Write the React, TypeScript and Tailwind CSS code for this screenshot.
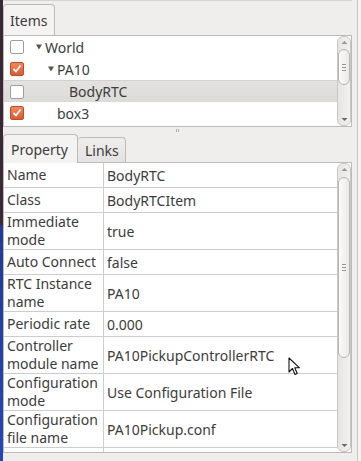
import React from 'react';

const font = { fontFamily: '"Noto Sans", "Open Sans", sans-serif' };

type TreeRow = { label: string; checked: boolean; depth: number; arrow: boolean; selected?: boolean };

const treeRows: TreeRow[] = [
  { label: 'World', checked: false, depth: 0, arrow: true },
  { label: 'PA10', checked: true, depth: 1, arrow: true },
  { label: 'BodyRTC', checked: false, depth: 2, arrow: false, selected: true },
  { label: 'box3', checked: true, depth: 1, arrow: false },
];

const props: { name: string[]; value: string }[] = [
  { name: ['Name'], value: 'BodyRTC' },
  { name: ['Class'], value: 'BodyRTCItem' },
  { name: ['Immediate', 'mode'], value: 'true' },
  { name: ['Auto Connect'], value: 'false' },
  { name: ['RTC Instance', 'name'], value: 'PA10' },
  { name: ['Periodic rate'], value: '0.000' },
  { name: ['Controller', 'module name'], value: 'PA10PickupControllerRTC' },
  { name: ['Configuration', 'mode'], value: 'Use Configuration File' },
  { name: ['Configuration', 'file name'], value: 'PA10Pickup.conf' },
];

function CheckBox({ checked }: { checked: boolean }) {
  if (!checked) {
    return <div className="w-[14px] h-[14px] rounded-[2px] border border-[#a09e9b] bg-white" />;
  }
  return (
    <div className="w-[14px] h-[14px] rounded-[2px] border border-[#b5532c] bg-gradient-to-b from-[#f3875a] to-[#dd5a2e] flex items-center justify-center">
      <svg width="10" height="10" viewBox="0 0 10 10">
        <path d="M1.5 5 L4 7.5 L8.5 1.5" stroke="white" strokeWidth="1.8" fill="none" />
      </svg>
    </div>
  );
}

function Arrow() {
  return (
    <svg width="6" height="6" viewBox="0 0 6 6" className="mr-[3px]">
      <path d="M0 0.5 L6 0.5 L3 5.5 Z" fill="#555" />
    </svg>
  );
}

function ScrollBar({ thumbTop, thumbHeight }: { thumbTop: number; thumbHeight: number }) {
  return (
    <div className="relative w-[14px] h-full rounded-[6px] border border-[#c9c7c4] bg-gradient-to-r from-[#e6e5e3] to-[#f2f1f0]">
      <svg className="absolute left-[3px] top-[3px]" width="7" height="5" viewBox="0 0 7 5">
        <path d="M0.5 4 L3.5 1 L6.5 4 Z" fill="#9a9895" />
      </svg>
      <div
        className="absolute left-[0px] w-[12px] rounded-[6px] border border-[#b9b7b4] bg-gradient-to-r from-[#fbfbfa] to-[#eae9e7] flex flex-col items-center justify-center gap-[2px]"
        style={{ top: thumbTop, height: thumbHeight }}
      >
        <div className="w-[4px] h-px bg-[#9a9895]" />
        <div className="w-[4px] h-px bg-[#9a9895]" />
        <div className="w-[4px] h-px bg-[#9a9895]" />
      </div>
      <svg className="absolute left-[3px] bottom-[3px]" width="7" height="5" viewBox="0 0 7 5">
        <path d="M0.5 1 L6.5 1 L3.5 4 Z" fill="#6a6865" />
      </svg>
    </div>
  );
}

export default function App() {
  return (
    <div className="relative w-[361px] h-[461px] flex bg-[#efeeec] text-[#3c3c3c] text-[14px] overflow-hidden" style={font}>
      {/* desktop edge */}
      <div className="w-[3px] h-full flex flex-col">
        <div className="h-[225px] bg-[#3a2935]" />
        <div className="flex-1 bg-gradient-to-b from-[#233a96] to-[#2446b8]" />
      </div>

      <div className="w-[349px] flex flex-col border-t border-[#d6d4d1]">
        {/* Items tab */}
        <div className="pt-[3px] flex">
          <div className="w-[52px] h-[32px] rounded-t-[4px] border border-b-0 border-[#bdbbb8] bg-[#f4f3f2] flex items-center pl-[6px] -mb-px">
            Items
          </div>
        </div>

        {/* Tree */}
        <div className="h-[92px] flex border border-[#bdbbb8] bg-white">
          <div className="flex-1 flex flex-col">
            {treeRows.map(r => (
              <div
                key={r.label}
                className={`h-[22px] flex items-center ${r.selected ? 'bg-gradient-to-b from-[#e3e2e0] to-[#dcdbd8] border-t border-[#d2d1ce]' : ''}`}
              >
                <div className="w-[32px] pl-[6px]">
                  <CheckBox checked={r.checked} />
                </div>
                <div className="flex items-center" style={{ paddingLeft: r.depth * 12 }}>
                  {r.arrow ? <Arrow /> : <div className="w-[9px]" />}
                  <span>{r.label}</span>
                </div>
              </div>
            ))}
          </div>
          <ScrollBar thumbTop={12} thumbHeight={36} />
        </div>

        {/* splitter */}
        <div className="h-[6px] flex justify-center items-center gap-px">
          <div className="w-px h-[3px] bg-[#b0aeab]" />
          <div className="w-px h-[3px] bg-[#b0aeab]" />
        </div>

        {/* Property / Links tabs */}
        <div className="flex items-end h-[29px]">
          <div className="w-[75px] h-[29px] rounded-t-[4px] border border-b-0 border-[#bdbbb8] bg-[#f4f3f2] flex items-center pl-[7px] -mb-px z-10">
            Property
          </div>
          <div className="w-[48px] h-[25px] rounded-t-[4px] border border-b-0 border-l-0 border-[#bdbbb8] bg-gradient-to-b from-[#efeeec] to-[#e4e3e1] flex items-center pl-[7px]">
            Links
          </div>
        </div>

        {/* Property table */}
        <div className="h-[291px] flex border border-[#bdbbb8] bg-white">
          <div className="flex-1 flex flex-col overflow-hidden">
            {props.map(p => (
              <div
                key={p.name.join(' ') + p.value}
                className={`flex shrink-0 border-b border-[#cdcdcd] ${p.name.length > 1 ? 'h-[37px]' : 'h-[25px]'}`}
              >
                <div className="w-[100px] shrink-0 border-r border-[#cdcdcd] pl-[3px] flex flex-col justify-center leading-[18px]">
                  {p.name.map(n => (
                    <span key={n}>{n}</span>
                  ))}
                </div>
                <div className="flex-1 pl-[3px] flex items-center whitespace-nowrap">{p.value}</div>
              </div>
            ))}
            <div className="flex flex-1">
              <div className="w-[100px] shrink-0 border-r border-[#cdcdcd]" />
            </div>
          </div>
          <ScrollBar thumbTop={13} thumbHeight={181} />
        </div>
      </div>

      {/* right edge of window */}
      <div className="flex-1 flex">
        <div className="w-[5px]" />
        <div className="w-px h-full bg-[#c9c7c4]" />
        <div className="flex-1 bg-[#f4f3f2]" />
      </div>

      {/* mouse cursor */}
      <svg className="absolute left-[288px] top-[357px]" width="14" height="20" viewBox="0 0 14 20">
        <path d="M1 1 L1 15 L4.5 11.5 L7 17.5 L9.2 16.5 L6.8 10.8 L11.5 10.8 Z" fill="white" stroke="#111" strokeWidth="1.1" strokeLinejoin="round" />
      </svg>
    </div>
  );
}
